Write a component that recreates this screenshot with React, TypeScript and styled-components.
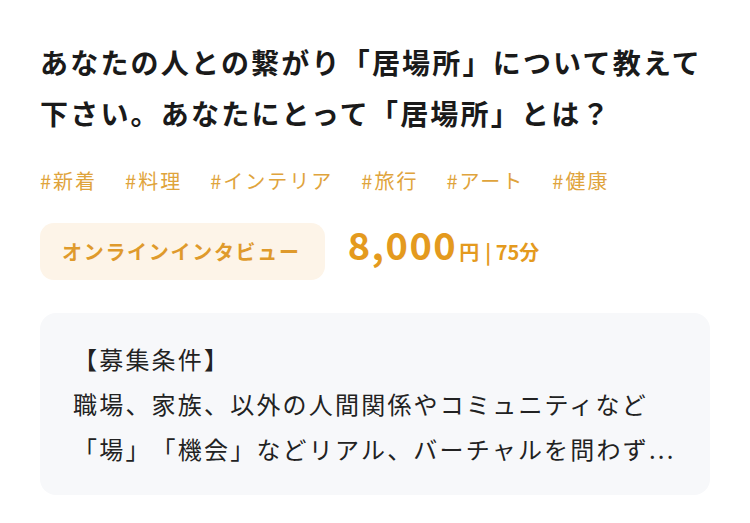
import React from "react";
import styled, { createGlobalStyle } from "styled-components";

const Global = createGlobalStyle`
  html, body { margin: 0; padding: 0; background: #ffffff; }
  body {
    font-family: "Noto Sans CJK JP", "Noto Sans", sans-serif;
    color: #1c1c1c;
    text-spacing-trim: space-all;
  }
`;

const Card = styled.article`
  width: 750px;
  box-sizing: border-box;
  padding: 37px 40px 26px 40px;
  display: flex;
  flex-direction: column;
`;

const Title = styled.h1`
  margin: 0;
  font-size: 28px;
  line-height: 51px;
  font-weight: 700;
  letter-spacing: 2.2px;
  color: #1a1a1a;
`;

const Tags = styled.ul`
  list-style: none;
  margin: 28px 0 0 0;
  padding: 0;
  display: flex;
  gap: 28px;
  line-height: 28px;
`;

const Tag = styled.li`
  font-size: 20px;
  letter-spacing: 2px;
  color: #dfa43c;
`;

const MetaRow = styled.div`
  margin-top: 28px;
  display: flex;
  align-items: center;
  gap: 23px;
`;

const Chip = styled.span`
  display: inline-flex;
  align-items: center;
  height: 57px;
  box-sizing: border-box;
  padding: 0 24px 0 22px;
  border-radius: 14px;
  background: #fdf4e8;
  color: #df9a2c;
  font-size: 20px;
  font-weight: 700;
  letter-spacing: 1.7px;
`;

const Price = styled.div`
  display: flex;
  align-items: baseline;
  color: #e49a1e;
  font-weight: 700;
  margin-top: -12px;
`;

const Amount = styled.span`
  font-size: 38px;
  letter-spacing: 1.5px;
  line-height: 1;
`;

const Unit = styled.span`
  font-size: 20px;
  margin-left: 2px;
`;

const Duration = styled.span`
  font-size: 20px;
  margin-left: 6px;
`;

const Requirements = styled.section`
  margin-top: 33px;
  background: #f7f8fa;
  border-radius: 16px;
  padding: 23px 30px 24px 33px;
  font-size: 24px;
  line-height: 45px;
  letter-spacing: 2.2px;
  color: #222222;
`;

const Line = styled.p`
  margin: 0;
  white-space: nowrap;
`;

const tags = ["#新着", "#料理", "#インテリア", "#旅行", "#アート", "#健康"];

export default function App() {
  return (
    <>
      <Global />
      <Card>
        <Title>
          あなたの人との繋がり「居場所」について教えて
          <br />
          下さい。あなたにとって「居場所」とは？
        </Title>
        <Tags>
          {tags.map((t) => (
            <Tag key={t}>{t}</Tag>
          ))}
        </Tags>
        <MetaRow>
          <Chip>オンラインインタビュー</Chip>
          <Price>
            <Amount>8,000</Amount>
            <Unit>円</Unit>
            <Duration>| 75分</Duration>
          </Price>
        </MetaRow>
        <Requirements>
          <Line>【募集条件】</Line>
          <Line>職場、家族、以外の人間関係やコミュニティなど</Line>
          <Line>「場」「機会」などリアル、バーチャルを問わず...</Line>
        </Requirements>
      </Card>
    </>
  );
}
